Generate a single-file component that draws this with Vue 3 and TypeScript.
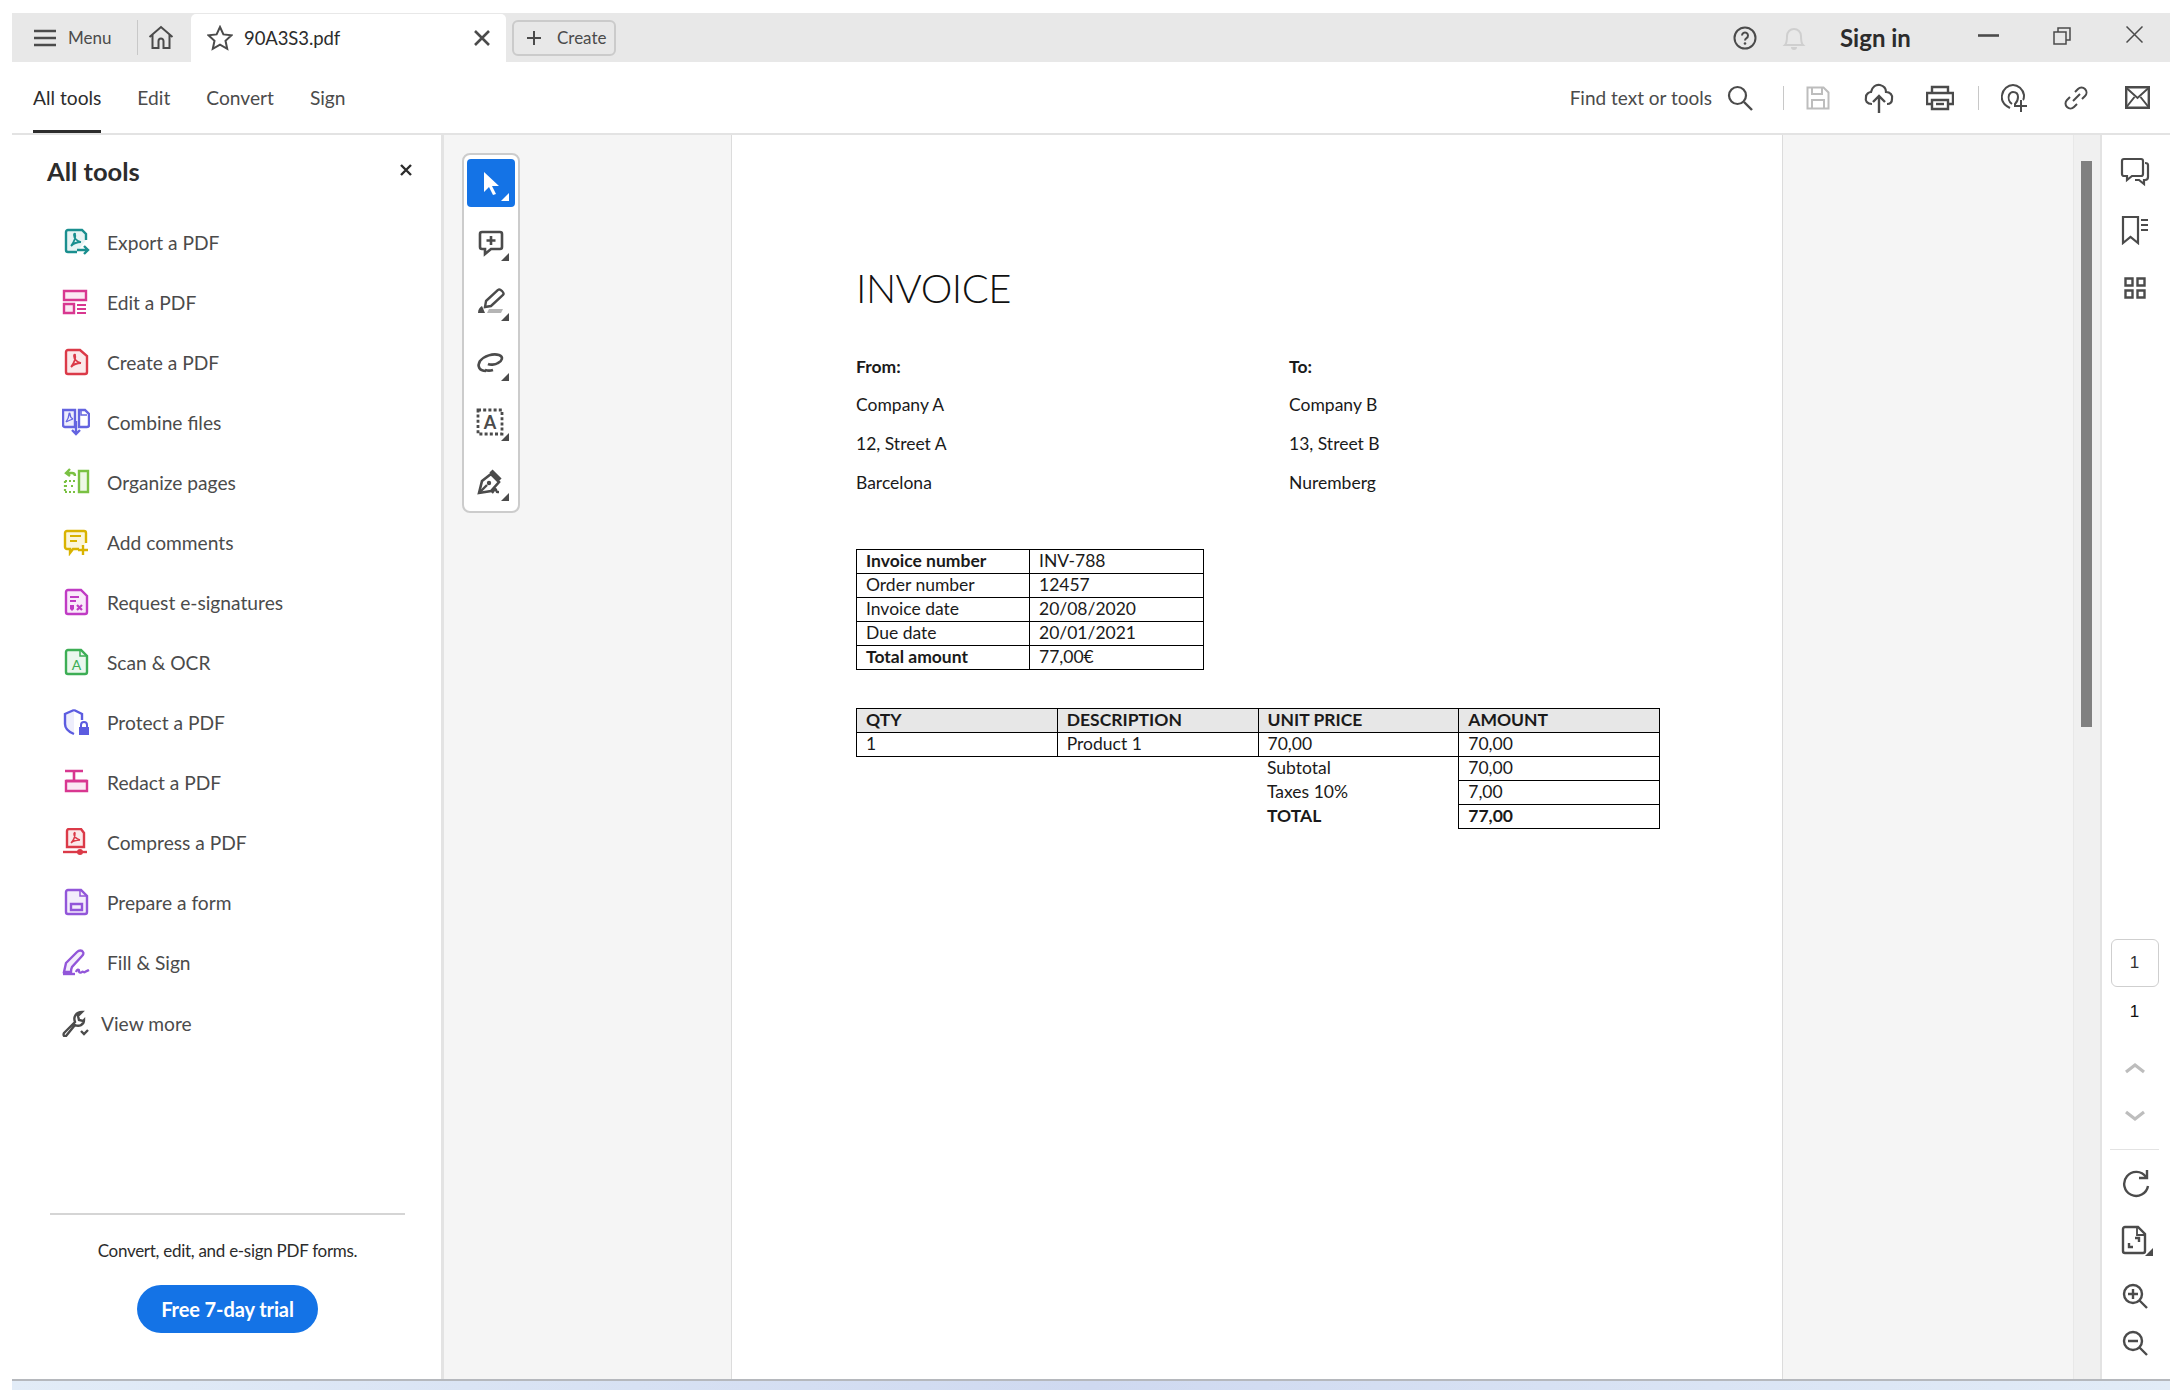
<script setup lang="ts">
const tools = [
  { label: 'Export a PDF', icon: '<path d="M24 12V6l-4-4H6a2 2 0 0 0-2 2v18a2 2 0 0 0 2 2h9" fill="#e8f4f4" stroke="#1a8f8f" stroke-width="2.400"/><path d="M9 18c3-4 5-9 4-12 0-1-1 0-1 1 0 3 3 6 7 7M9 18c2-2 6-4 10-4" fill="none" stroke="#1a8f8f" stroke-width="1.800"/><path d="M15 22h11m-4-4 4 4-4 4" fill="none" stroke="#1a8f8f" stroke-width="2.400"/>' },
  { label: 'Edit a PDF', icon: '<path d="M2 3h22v9H2z" fill="#fbe8f3" stroke="#d83790" stroke-width="2.400"/><path d="M2 16h10v9H2z" fill="#fbe8f3" stroke="#d83790" stroke-width="2.400"/><path d="M15 17h9M15 21h9M15 25h9" stroke="#d83790" stroke-width="2.200"/>' },
  { label: 'Create a PDF', icon: '<path d="M18 2H6a2 2 0 0 0-2 2v20a2 2 0 0 0 2 2h17a2 2 0 0 0 2-2V8z" fill="#fbe9ea" stroke="#db3a48" stroke-width="2.400"/><path d="M9 19c3-4 5-9 4-12 0-1-1 0-1 1 0 3 3 6 7 7M9 19c2-2 6-4 10-4" fill="none" stroke="#db3a48" stroke-width="1.800"/>' },
  { label: 'Combine files', icon: '<path d="M1 2h12v17H3a2 2 0 0 1-2-2z" fill="#eeeefc" stroke="#6464e0" stroke-width="2.400"/><path d="M17 2h6l4 4v11a2 2 0 0 1-2 2h-8z" fill="none" stroke="#6464e0" stroke-width="2.400"/><path d="M4 14c2-3 3-6 3-8 0-1 1-1 1 0 0 2 1 4 3 5M4 14c2-1 4-2 7-3" fill="none" stroke="#6464e0" stroke-width="1.300"/><path d="M19 3v4h6" fill="none" stroke="#6464e0" stroke-width="1.500"/><path d="M14 13v13m-4-4 4 4 4-4" fill="none" stroke="#6464e0" stroke-width="2.400"/>' },
  { label: 'Organize pages', icon: '<path d="M17 3h9v21h-9z" fill="#eef8e6" stroke="#7ac143" stroke-width="2.400"/><path d="M3 13h10M3 18h2M9 18h2M3 24h10M3 13v11" fill="none" stroke="#7ac143" stroke-width="2.200" stroke-dasharray="2 2"/><path d="M5 5h5c2 0 3 1 3 3M8 1 4 5l4 3" fill="none" stroke="#7ac143" stroke-width="2.400"/>' },
  { label: 'Add comments', icon: '<path d="M17 21H11l-3 4v-4H5a2 2 0 0 1-2-2V5a2 2 0 0 1 2-2h17a2 2 0 0 1 2 2v10" fill="#fbf6da" stroke="#d9b300" stroke-width="2.400"/><path d="M8 8h11M8 13h7" stroke="#d9b300" stroke-width="2.200"/><path d="M21 17v10M16 22h10" stroke="#d9b300" stroke-width="2.400"/>' },
  { label: 'Request e-signatures', icon: '<path d="M19 2H6a2 2 0 0 0-2 2v20a2 2 0 0 0 2 2h17a2 2 0 0 0 2-2V8z" fill="#f9eafa" stroke="#c03bc4" stroke-width="2.400"/><path d="M8 9h9M8 13h6" stroke="#c03bc4" stroke-width="2.200"/><path d="M8 17h4v4l-2 2-2-2z" fill="#c03bc4"/><path d="m15 17 5 5m0-5-5 5" stroke="#c03bc4" stroke-width="2.200"/>' },
  { label: 'Scan & OCR', icon: '<path d="M19 2H6a2 2 0 0 0-2 2v20a2 2 0 0 0 2 2h17a2 2 0 0 0 2-2V8z" fill="#ebf7ee" stroke="#3dae55" stroke-width="2.400"/><path d="M18 2v6h7" fill="none" stroke="#3dae55" stroke-width="1.500"/><text x="14.500" y="22" text-anchor="middle" font-family="Lato" font-size="14" fill="#3dae55">A</text>' },
  { label: 'Protect a PDF', icon: '<path d="M12 3v22L4 20V7z" fill="#eeeefc"/><path d="M12 2 3 6v10c0 5 4 8 9 10M12 2l8 4v6" fill="none" stroke="#5c5ce0" stroke-width="2.400"/><rect x="17" y="19" width="10" height="8" fill="#5c5ce0"/><path d="M19 19v-2a3 3 0 0 1 6 0v2" fill="none" stroke="#5c5ce0" stroke-width="2"/>' },
  { label: 'Redact a PDF', icon: '<path d="M3 3h18M12 3v9" fill="none" stroke="#d83790" stroke-width="2.600"/><path d="M4 13h21v10H4z" fill="#fbe8f3" stroke="#d83790" stroke-width="2.400"/><path d="M4 13h21" stroke="#d83790" stroke-width="2.600"/>' },
  { label: 'Compress a PDF', icon: '<path d="M19 1H7a2 2 0 0 0-2 2v16h17V5z" fill="#fbe9ea" stroke="#db3a48" stroke-width="2.400"/><path d="M9 15c3-3 4-7 4-10 0-1-1 0-1 1 0 3 3 5 6 6M9 15c2-2 6-3 9-3" fill="none" stroke="#db3a48" stroke-width="1.500"/><path d="M1 24h24" stroke="#db3a48" stroke-width="2.400"/><circle cx="18" cy="24" r="3" fill="#db3a48"/>' },
  { label: 'Prepare a form', icon: '<path d="M19 2H6a2 2 0 0 0-2 2v20a2 2 0 0 0 2 2h17a2 2 0 0 0 2-2V8z" fill="#f3edfb" stroke="#9256d9" stroke-width="2.400"/><path d="M18 2v6h7" fill="none" stroke="#9256d9" stroke-width="1.500"/><path d="M9 16h11v6H9z" fill="none" stroke="#9256d9" stroke-width="2.400"/>' },
  { label: 'Fill & Sign', icon: '<path d="M2 24 4 15 15 4c2-2 5-2 6 0 1 1 0 3-1 4L10 19c-1 2-1 4-1 5z" fill="#f3edfb" stroke="#9256d9" stroke-width="2.400"/><path d="M1 26h12" stroke="#9256d9" stroke-width="2.400"/><path d="M14 24c1-3 3-3 3-1s2 2 3 1 2 1 3 0 2-1 4-2" fill="none" stroke="#9256d9" stroke-width="2.400"/>' },
]

const railTools = [
  { icon: '<path d="M7 5h18a2 2 0 0 1 2 2v13a2 2 0 0 1-2 2h-9l-6 5v-5H7a2 2 0 0 1-2-2V7a2 2 0 0 1 2-2z" fill="none" stroke="#4b4b4b" stroke-width="2.600"/><path d="M16 9v9M11.500 13.500h9" stroke="#4b4b4b" stroke-width="2.600"/>' },
  { icon: '<path d="M14 22h14l-2 4H12z" fill="#b5b5b5"/><path d="m11 14 12-11c2-2 7 3 5 5L16 19l-6 1z" fill="none" stroke="#4b4b4b" stroke-width="2.400"/><path d="M3 26c0-4 2-6 4-7l3 7z" fill="#4b4b4b"/>' },
  { icon: '<path d="M11 24C4 24 2 19 5 14c4-5 13-8 19-6 5 2 3 6-1 8-3 2-8 2-10 1" fill="none" stroke="#4b4b4b" stroke-width="2.600"/><path d="M10 23c3 1 5 1 8 0" fill="none" stroke="#4b4b4b" stroke-width="2.600"/>' },
  { icon: '<path d="M3 3h24v24H3z" fill="none" stroke="#4b4b4b" stroke-width="2.800" stroke-dasharray="3 2.200"/><text x="15" y="22" text-anchor="middle" font-family="Lato" font-weight="700" font-size="18" fill="#4b4b4b">A</text>' },
  { icon: '<path d="m4 26 3-12 9-7 8 8-8 9z" fill="none" stroke="#4b4b4b" stroke-width="2.600"/><path d="m16 4 9 9" stroke="#4b4b4b" stroke-width="4.400"/><path d="m4 26 8-8" stroke="#4b4b4b" stroke-width="2.400"/><circle cx="14" cy="16" r="2.200" fill="#4b4b4b"/><path d="M17 26c2-2 3-6 4-3s1 2 3 2" fill="none" stroke="#4b4b4b" stroke-width="2.400"/>' },
]

const invoiceInfo = [
  { label: 'Invoice number', value: 'INV-788', bold: true },
  { label: 'Order number', value: '12457', bold: false },
  { label: 'Invoice date', value: '20/08/2020', bold: false },
  { label: 'Due date', value: '20/01/2021', bold: false },
  { label: 'Total amount', value: '77,00€', bold: true },
]
</script>

<template>
  <div class="window">
    <header class="tabbar">
      <div class="menu">
        <svg width="22" height="18" viewBox="0 0 22 18"><path d="M0 2h22M0 9h22M0 16h22" stroke="#4b4b4b" stroke-width="2.400"/></svg>
        <span>Menu</span>
      </div>
      <div class="home">
        <svg width="26" height="26" viewBox="0 0 26 26"><path d="M1.500 12 13 2l11.500 10M4.500 10v13h6v-7a2.500 2.500 0 0 1 5 0v7h6V10" fill="none" stroke="#4b4b4b" stroke-width="2"/></svg>
      </div>
      <div class="tab">
        <svg width="26" height="26" viewBox="0 0 26 26"><path d="m13 2 3.400 7.400 8.100.9-6 5.500 1.700 8L13 19.700 5.800 23.800l1.700-8-6-5.500 8.100-.9z" fill="none" stroke="#4b4b4b" stroke-width="2"/></svg>
        <span class="filename">90A3S3.pdf</span>
        <svg class="tab-close" width="16" height="16" viewBox="0 0 16 16"><path d="m1 1 14 14M15 1 1 15" stroke="#4b4b4b" stroke-width="2.600"/></svg>
      </div>
      <button class="create">
        <svg width="14" height="14" viewBox="0 0 14 14"><path d="M7 0v14M0 7h14" stroke="#4b4b4b" stroke-width="2"/></svg>
        <span>Create</span>
      </button>
      <div class="tabbar-right">
        <svg class="help" width="24" height="24" viewBox="0 0 24 24"><circle cx="12" cy="12" r="10.500" fill="none" stroke="#4b4b4b" stroke-width="2"/><path d="M9 9.500a3 3 0 1 1 4.500 2.600c-1 .6-1.500 1-1.500 2.400" fill="none" stroke="#4b4b4b" stroke-width="2"/><circle cx="12" cy="17.500" r="1.300" fill="#4b4b4b"/></svg>
        <svg class="bell" width="24" height="26" viewBox="0 0 24 26"><path d="M3 20c2-2 2-4 2-9a7 7 0 0 1 14 0c0 5 0 7 2 9z" fill="none" stroke="#cfcfcf" stroke-width="2"/><path d="M9 22a3 3 0 0 0 6 0" fill="#cfcfcf"/></svg>
        <span class="signin">Sign in</span>
        <svg class="win-min" width="21" height="3" viewBox="0 0 21 3"><path d="M0 1.500h21" stroke="#4b4b4b" stroke-width="2.600"/></svg>
        <svg class="win-max" width="18" height="18" viewBox="0 0 18 18"><path d="M1 5h12v12H1zM5 5V1h12v12h-4" fill="none" stroke="#4b4b4b" stroke-width="1.500"/></svg>
        <svg class="win-close" width="17" height="17" viewBox="0 0 17 17"><path d="m.500.500 16 16M16.500.500l-16 16" stroke="#4b4b4b" stroke-width="1.500"/></svg>
      </div>
    </header>

    <nav class="toolbar">
      <a class="nav-item active">All tools</a>
      <a class="nav-item">Edit</a>
      <a class="nav-item">Convert</a>
      <a class="nav-item">Sign</a>
      <div class="actions">
        <span class="find">Find text or tools</span>
        <svg width="26" height="26" viewBox="0 0 26 26"><circle cx="10.500" cy="10.500" r="8.500" fill="none" stroke="#4b4b4b" stroke-width="2.200"/><path d="m17 17 8 8" stroke="#4b4b4b" stroke-width="2.400"/></svg>
        <i class="sep sep-a"></i>
        <svg width="24" height="24" viewBox="0 0 24 24"><path d="M1.500 1.500h16l5 5v16h-21z" fill="none" stroke="#bdbdbd" stroke-width="2"/><path d="M6 2v6h10V2M6 22v-8h12v8" fill="none" stroke="#bdbdbd" stroke-width="2"/></svg>
        <svg class="ico-upload" width="30" height="30" viewBox="0 0 30 30"><path d="M8 21c-5 0-7-3-6-7 0-3 3-5 5-5 1-5 5-8 9-7 4 1 6 4 6 7 4 0 7 3 6 7 0 3-2 5-5 5" fill="none" stroke="#4b4b4b" stroke-width="2.200"/><path d="M15 30V13m-6 6 6-6 6 6" fill="none" stroke="#4b4b4b" stroke-width="2.400"/></svg>
        <svg class="ico-print" width="28" height="26" viewBox="0 0 28 26"><path d="M6 8V2h16v6M6 19H1V8h26v11h-5" fill="none" stroke="#4b4b4b" stroke-width="2.400"/><path d="M6 15h16v9H6z" fill="none" stroke="#4b4b4b" stroke-width="2.400"/><path d="M10 19h8" stroke="#4b4b4b" stroke-width="2.400"/></svg>
        <i class="sep sep-b"></i>
        <svg class="ico-share" width="26" height="28" viewBox="0 0 26 28"><path d="M9 24C3 21 0 16 1 11 2 5 7 1 12 1s10 4 11 10c0 2 0 4-1 5" fill="none" stroke="#4b4b4b" stroke-width="2"/><path d="M11 20c-3-2-4-6-3-9 1-2 3-3 4-3 3 0 5 2 5 5 0 3-1 5-3 7v3" fill="none" stroke="#4b4b4b" stroke-width="2"/><path d="M20 16v12M14 22h12" stroke="#4b4b4b" stroke-width="2"/></svg>
        <svg class="ico-link" width="26" height="26" viewBox="0 0 26 26"><path d="m10 16 7-7M12 7l3-3c2-2 5-2 7 0s2 5 0 7l-3 3M14 19l-3 3c-2 2-5 2-7 0s-2-5 0-7l3-3" fill="none" stroke="#4b4b4b" stroke-width="2"/></svg>
        <svg class="ico-mail" width="25" height="23" viewBox="0 0 25 23"><path d="M1.200 1.200h22.600v20.600H1.200z" fill="none" stroke="#4b4b4b" stroke-width="2.400"/><path d="m1.500 2 11 10 11-10M1.500 21l8-10M23.500 21l-8-10" fill="none" stroke="#4b4b4b" stroke-width="2"/></svg>
      </div>
    </nav>

    <main class="main">
      <aside class="panel">
        <div class="panel-head">
          <h2>All tools</h2>
          <svg width="12" height="12" viewBox="0 0 12 12"><path d="m1 1 10 10M11 1 1 11" stroke="#2c2c2c" stroke-width="2.400"/></svg>
        </div>
        <ul class="tool-list">
          <li v-for="t in tools" :key="t.label" class="tool">
            <svg width="28" height="28" viewBox="0 0 28 28" v-html="t.icon"></svg>
            <span>{{ t.label }}</span>
          </li>
          <li class="tool more">
            <svg width="28" height="28" viewBox="0 0 28 28"><path d="M2 24 13 13c-2-5 1-10 7-10l-4 4 1 4 4 1 1-1c0 5-5 7-9 5L4 27c-2 1-3-1-2-3z" fill="none" stroke="#4b4b4b" stroke-width="2.400"/><path d="m19 22 3 3 4-4" fill="none" stroke="#4b4b4b" stroke-width="2.400"/></svg>
            <span>View more</span>
          </li>
        </ul>
        <div class="promo">
          <p>Convert, edit, and e-sign PDF forms.</p>
          <button class="trial">Free 7-day trial</button>
        </div>
      </aside>

      <section class="rail-area">
        <div class="rail">
          <div class="rail-btn selected">
            <svg width="32" height="32" viewBox="0 0 32 32"><path d="M9 5v20l5-5 4 8 3-1-4-8h7z" fill="#fff"/></svg>
            <i class="corner white"></i>
          </div>
          <div v-for="(r, i) in railTools" :key="i" class="rail-btn">
            <svg width="32" height="32" viewBox="0 0 32 32" v-html="r.icon"></svg>
            <i class="corner"></i>
          </div>
        </div>
      </section>

      <article class="page">
        <h1>INVOICE</h1>
        <div class="parties">
          <div class="party">
            <b>From:</b><span>Company A</span><span>12, Street A</span><span>Barcelona</span>
          </div>
          <div class="party">
            <b>To:</b><span>Company B</span><span>13, Street B</span><span>Nuremberg</span>
          </div>
        </div>
        <table class="info">
          <tbody>
            <tr v-for="row in invoiceInfo" :key="row.label">
              <td :class="{ bold: row.bold }">{{ row.label }}</td>
              <td>{{ row.value }}</td>
            </tr>
          </tbody>
        </table>
        <table class="lines">
          <thead>
            <tr><th>QTY</th><th>DESCRIPTION</th><th>UNIT PRICE</th><th>AMOUNT</th></tr>
          </thead>
          <tbody>
            <tr><td>1</td><td>Product 1</td><td>70,00</td><td>70,00</td></tr>
            <tr><td class="none" colspan="2"></td><td class="none">Subtotal</td><td>70,00</td></tr>
            <tr><td class="none" colspan="2"></td><td class="none">Taxes 10%</td><td>7,00</td></tr>
            <tr class="bold"><td class="none" colspan="2"></td><td class="none">TOTAL</td><td>77,00</td></tr>
          </tbody>
        </table>
      </article>

      <div class="gutter"></div>
      <div class="track"><div class="thumb"></div></div>

      <aside class="side">
        <svg class="s-comments" width="30" height="30" viewBox="0 0 30 30"><path d="M4 2h17a2 2 0 0 1 2 2v13a2 2 0 0 1-2 2H12l-5 4v-4H4a2 2 0 0 1-2-2V4a2 2 0 0 1 2-2z" fill="none" stroke="#4b4b4b" stroke-width="2.200"/><path d="M25 6c2 0 3 1 3 2v12c0 2-1 3-3 3h-1v4l-5-4h-4" fill="none" stroke="#4b4b4b" stroke-width="2.200"/></svg>
        <svg class="s-bookmark" width="30" height="30" viewBox="0 0 30 30"><path d="M3 2h15v26l-7.500-6L3 28z" fill="none" stroke="#4b4b4b" stroke-width="2.200"/><path d="M21 5h7M21 10h7M21 15h7" stroke="#4b4b4b" stroke-width="2.200"/></svg>
        <svg class="s-grid" width="22" height="22" viewBox="0 0 22 22"><path d="M1.500 1.500h7v7h-7zM13.500 1.500h7v7h-7zM1.500 13.500h7v7h-7zM13.500 13.500h7v7h-7z" fill="none" stroke="#4b4b4b" stroke-width="2.400"/></svg>

        <div class="page-box">1</div>
        <div class="page-total">1</div>
        <svg class="s-up" width="22" height="12" viewBox="0 0 22 12"><path d="m2 10 9-7 9 7" fill="none" stroke="#bdbdbd" stroke-width="3.200"/></svg>
        <svg class="s-down" width="22" height="12" viewBox="0 0 22 12"><path d="m2 2 9 7 9-7" fill="none" stroke="#bdbdbd" stroke-width="3.200"/></svg>
        <div class="side-rule"></div>
        <svg class="s-rotate" width="30" height="30" viewBox="0 0 30 30"><path d="M26 9a12 12 0 1 0 2 9" fill="none" stroke="#4b4b4b" stroke-width="2.400"/><path d="M27 2v8h-8" fill="none" stroke="#4b4b4b" stroke-width="2.400"/></svg>
        <div class="s-fit">
          <svg width="30" height="30" viewBox="0 0 30 30"><path d="M18 2H5a2 2 0 0 0-2 2v22a2 2 0 0 0 2 2h18a2 2 0 0 0 2-2V9z" fill="none" stroke="#4b4b4b" stroke-width="2.400"/><path d="M17 3v7h8" fill="none" stroke="#4b4b4b" stroke-width="1.800"/><path d="M15 13h4v4M13 22H9v-4" fill="none" stroke="#4b4b4b" stroke-width="2.400"/></svg>
          <i class="corner small"></i>
        </div>
        <svg class="s-zoomin" width="26" height="26" viewBox="0 0 26 26"><circle cx="11" cy="11" r="9" fill="none" stroke="#4b4b4b" stroke-width="2.400"/><path d="m17.500 17.500 7.500 7.500M11 6v10M6 11h10" stroke="#4b4b4b" stroke-width="2.400"/></svg>
        <svg class="s-zoomout" width="26" height="26" viewBox="0 0 26 26"><circle cx="11" cy="11" r="9" fill="none" stroke="#4b4b4b" stroke-width="2.400"/><path d="m17.500 17.500 7.500 7.500M6 11h10" stroke="#4b4b4b" stroke-width="2.400"/></svg>
      </aside>
    </main>
    <div class="desktop-strip"></div>
  </div>
</template>

<style>
html, body { margin: 0; background: #fff; }
</style>

<style scoped>
.window {
  width: 2182px;
  height: 1390px;
  box-sizing: border-box;
  padding: 13px 12px 0;
  display: flex;
  flex-direction: column;
  overflow: hidden;
  font-family: Lato, "Open Sans", sans-serif;
  color: #2c2c2c;
}

/* tab strip */
.tabbar {
  height: 49px;
  background: #e8e8e8;
  display: flex;
  align-items: center;
  flex: none;
}
.menu {
  display: flex;
  align-items: center;
  gap: 12px;
  padding-left: 22px;
  width: 126px;
  flex: none;
  box-sizing: border-box;
  font-size: 17px;
  color: #4b4b4b;
  height: 35px;
  border-right: 1px solid #c8c8c8;
}
.home {
  width: 53px;
  flex: none;
  display: flex;
  justify-content: center;
  padding-right: 8px;
  box-sizing: border-box;
}
.tab {
  width: 315px;
  height: 48px;
  margin-top: 1px;
  background: #fff;
  border-radius: 5px 5px 0 0;
  display: flex;
  align-items: center;
  box-sizing: border-box;
  padding-left: 16px;
  flex: none;
}
.filename { margin-left: 11px; font-size: 18.500px; letter-spacing: -0.1px; color: #2c2c2c; }
.tab-close { margin-left: auto; margin-right: 16px; }
.create {
  margin-left: 6px;
  width: 104px;
  height: 36px;
  box-sizing: border-box;
  border: 2px solid #cbcbcb;
  border-radius: 6px;
  background: #e8e8e8;
  display: flex;
  align-items: center;
  gap: 16px;
  padding: 0 0 0 13px;
  font: 17px Lato, sans-serif;
  color: #4b4b4b;
}
.tabbar-right {
  margin-left: auto;
  display: flex;
  align-items: center;
  height: 100%;
  flex: none;
  width: 449px;
}
.tabbar-right svg { flex: none; }
.help { margin-left: 12px; }
.bell { margin-left: 25px; }
.signin { margin-left: 34px; font-size: 24px; font-weight: 700; color: #2c2c2c; width: 72px; white-space: nowrap; }
.win-min { margin-left: 66px; margin-top: -5px; }
.win-max { margin-left: 54px; margin-top: -3px; }
.win-close { margin-left: 55px; margin-top: -7px; }

/* second row */
.toolbar {
  height: 71px;
  flex: none;
  display: flex;
  align-items: stretch;
  border-bottom: 2px solid #e3e3e3;
  padding-left: 21px;
}
.nav-item {
  display: flex;
  align-items: center;
  font-size: 19.200px;
  color: #4b4b4b;
  margin-right: 36px;
  height: 71px;
  box-sizing: border-box;
  padding-top: 3px;
  border-bottom: 3px solid transparent;
}
.nav-item.active { color: #2c2c2c; border-bottom-color: #2c2c2c; }
.actions {
  margin-left: auto;
  display: flex;
  align-items: center;
  padding-right: 20px;
}
.actions svg { flex: none; }
.find { font-size: 19px; color: #4b4b4b; margin-right: 15px; white-space: nowrap; }
.sep { width: 1px; height: 24px; background: #c8c8c8; display: block; flex: none; }
.sep-a { margin: 0 22px 0 30px; }
.sep-b { margin: 0 22px 0 24px; }
.ico-upload { margin-left: 34px; }
.ico-print { margin-left: 32px; }
.ico-link { margin-left: 36px; }
.ico-mail { margin-left: 36px; }

.main { flex: 1; min-height: 0; display: flex; }

/* all tools panel */
.panel {
  width: 432px;
  flex: none;
  box-sizing: border-box;
  border-right: 3px solid #e3e3e3;
  display: flex;
  flex-direction: column;
}
.panel-head {
  height: 71px;
  display: flex;
  align-items: center;
  justify-content: space-between;
  padding: 0 29px 0 35px;
  flex: none;
}
.panel-head h2 { margin: 0; font-size: 25.500px; font-weight: 700; color: #2c2c2c; }
.panel-head svg { margin-top: -2px; }
.tool-list { list-style: none; margin: 6px 0 0; padding: 0 0 0 50px; }
.tool {
  height: 60px;
  display: flex;
  align-items: center;
  gap: 17px;
  font-size: 19.200px;
  color: #4b4b4b;
}
.tool svg { flex: none; }
.tool.more { gap: 11px; margin-top: 1px; }
.promo { margin-top: auto; margin-left: 38px; margin-right: 36px; border-top: 2px solid #d5d5d5; text-align: center; height: 166px; flex: none; box-sizing: border-box; }
.promo p { margin: 24px 0 0; font-size: 17px; letter-spacing: -0.280px; line-height: 24px; color: #2c2c2c; }
.trial {
  margin-top: 22px;
  width: 181px;
  height: 48px;
  border: 0;
  border-radius: 24px;
  background: #1473e6;
  color: #fff;
  font: 700 20px Lato, sans-serif;
  letter-spacing: -0.100px;
}

/* quick tools */
.rail-area { width: 287px; flex: none; background: #f5f5f5; padding: 18px 0 0 18px; box-sizing: border-box; }
.rail {
  width: 58px;
  box-sizing: border-box;
  border: 2px solid #cccccc;
  border-radius: 8px;
  background: #fff;
  padding: 4px 3px;
  height: 360px;
  display: flex;
  flex-direction: column;
  gap: 12px;
}
.rail-btn { width: 48px; height: 48px; border-radius: 4px; display: flex; align-items: center; justify-content: center; position: relative; flex: none; }
.rail-btn.selected { background: #1473e6; }
.corner { position: absolute; right: 6px; bottom: 6px; width: 0; height: 0; border-style: solid; border-width: 0 0 8px 8px; border-color: transparent transparent #4b4b4b transparent; }
.corner.white { border-bottom-color: #fff; }
.corner.small { right: -3px; bottom: -1px; }

/* document page */
.page {
  width: 1052px;
  flex: none;
  box-sizing: border-box;
  background: #fff;
  border-left: 1px solid #dcdcdc;
  border-right: 1px solid #dcdcdc;
  padding: 131px 0 0 124px;
  color: #1a1a1a;
  font-size: 17.500px;
}
.page h1 { margin: 0; font-size: 40px; letter-spacing: -0.500px; line-height: 44px; font-weight: 300; color: #111; }
.parties { display: flex; margin-top: 37px; }
.party { width: 433px; display: grid; grid-auto-rows: 38.670px; align-items: center; }
.party b { font-weight: 700; }
table { border-collapse: collapse; table-layout: fixed; }
td, th { height: 24px; padding: 0 0 0 9px; border: 1px solid #000; box-sizing: border-box; line-height: 22px; font-weight: 400; text-align: left; }
.info { width: 348px; margin-top: 47px; }
.info td:first-child { width: 173px; }
.bold, .bold td { font-weight: 700; }
.lines { width: 804px; margin-top: 38px; }
.lines th { background: #e7e7e7; font-weight: 700; width: 25%; }
.lines td.none { border: 0; }

/* scroll area + right rail */
.gutter { flex: 1; background: #f5f5f5; }
.track { width: 27px; flex: none; background: #f0f0f0; border-left: 1px solid #e8e8e8; box-sizing: border-box; padding: 26px 0 0 7px; }
.thumb { width: 11px; height: 566px; background: #808080; }
.side {
  width: 70px;
  flex: none;
  box-sizing: border-box;
  border-left: 2px solid #e3e3e3;
  padding-right: 3px;
  display: flex;
  flex-direction: column;
  align-items: center;
}
.side > svg, .s-fit { flex: none; }
.s-comments { margin-top: 22px; }
.s-bookmark { margin-top: 28px; }
.s-grid { margin-top: 32px; }
.page-box {
  margin-top: auto;
  width: 48px;
  height: 48px;
  box-sizing: border-box;
  border: 1px solid #cfcfcf;
  border-radius: 6px;
  display: flex;
  align-items: center;
  justify-content: center;
  font: 17px "Liberation Sans", sans-serif;
  color: #333;
  flex: none;
}
.page-total { margin-top: 12px; height: 26px; font: 17px/26px "Liberation Sans", sans-serif; color: #111; flex: none; }
.s-up { margin-top: 37px; }
.s-down { margin-top: 36px; }
.side-rule { width: 49px; height: 1px; background: #e3e3e3; margin-top: 27px; flex: none; }
.s-rotate { margin-top: 18px; }
.s-fit { margin-top: 27px; position: relative; width: 30px; height: 30px; }
.s-zoomin { margin-top: 28px; }
.s-zoomout { margin-top: 21px; margin-bottom: 23px; }

.desktop-strip {
  height: 11px;
  flex: none;
  box-sizing: border-box;
  border-top: 2px solid #b5b8bd;
  background: linear-gradient(90deg, #e2ecf7, #cfd9f0 50%, #e2ecf7);
}
</style>
